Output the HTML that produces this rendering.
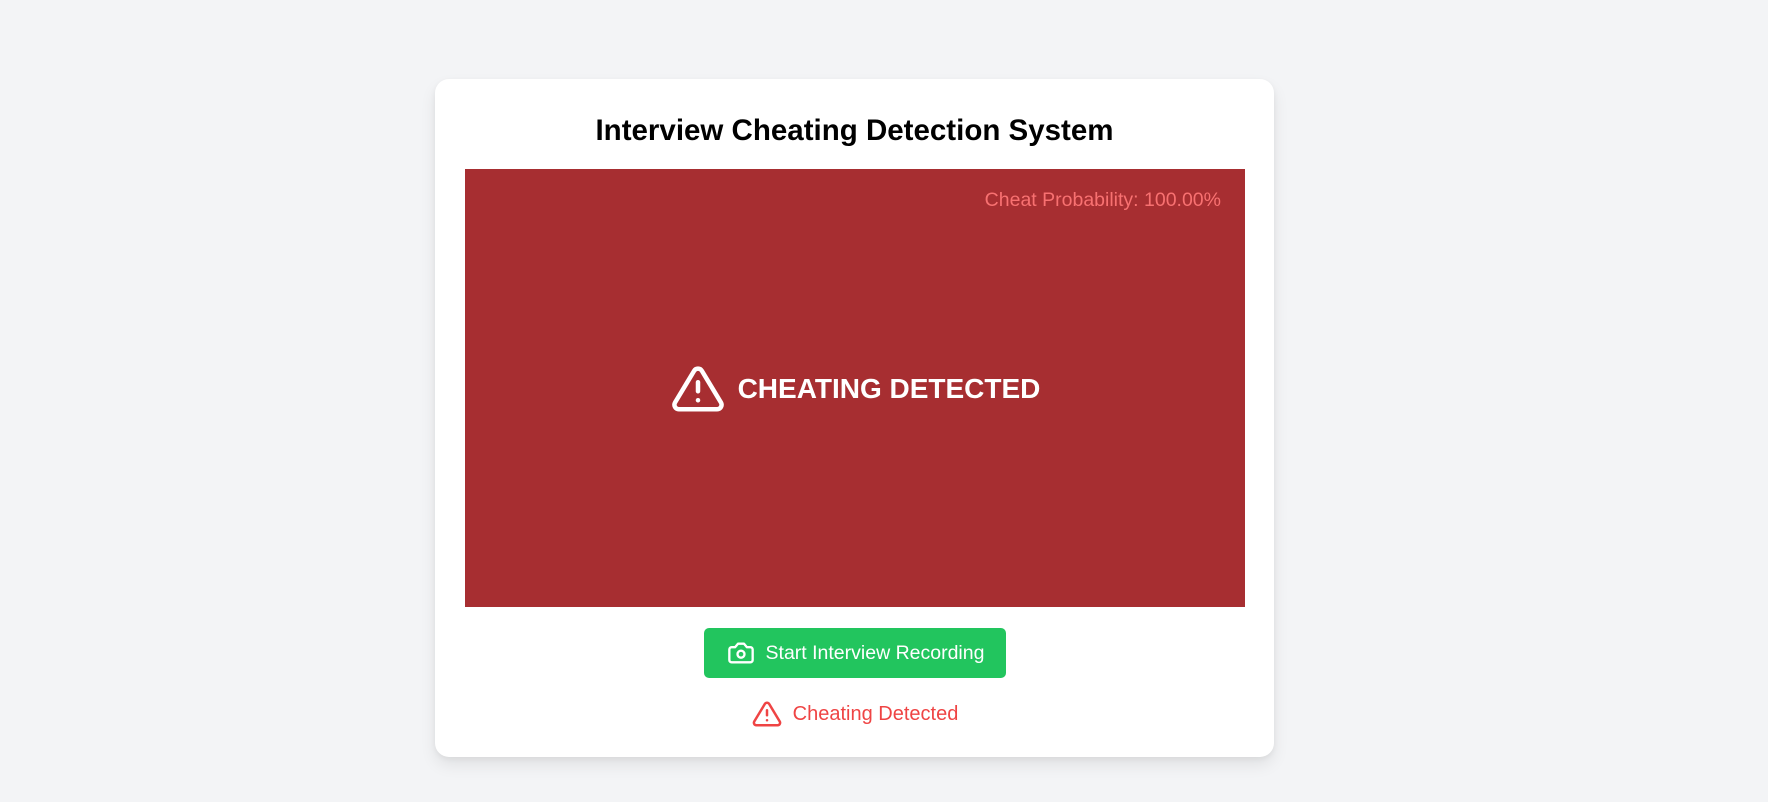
<!DOCTYPE html>
<html><head><style>
body{margin:0;width:1768px;height:802px;background:#f3f4f6;font-family:"Liberation Sans",sans-serif;position:relative;overflow:hidden}
.card{position:absolute;left:435px;top:79px;width:839px;height:678px;background:#fff;border-radius:14px;box-shadow:0 8px 16px rgba(0,0,0,.08),0 2px 6px rgba(0,0,0,.05)}
h1{position:absolute;left:435px;width:839px;top:112px;margin:0;text-align:center;font-size:29.5px;font-weight:bold;color:#000;line-height:38px}
.video{position:absolute;left:465px;top:169px;width:780px;height:438px;background:#a72e31}
.prob{position:absolute;right:24px;top:20px;color:#f87171;font-size:19.5px}
.center{position:absolute;left:0;right:0;top:193px;display:flex;justify-content:center;align-items:center;gap:12px;color:#fff;font-weight:bold;font-size:28px}
.btn{position:absolute;left:704px;top:628px;width:302px;height:50px;background:#22c55e;border-radius:5px;display:flex;align-items:center;justify-content:center;gap:10px;color:#fff;font-size:19.5px}
.status{position:absolute;left:435px;width:839px;top:699px;display:flex;justify-content:center;align-items:center;gap:10px;color:#ef4444;font-size:20px}
</style></head><body>
<div class="card"></div>
<h1>Interview Cheating Detection System</h1>
<div class="video">
<div class="prob">Cheat Probability: 100.00%</div>
<div class="center">
<svg width="56" height="54" viewBox="0 0 24 24" fill="none" stroke="#fff" stroke-width="2" stroke-linecap="round" stroke-linejoin="round"><path d="M10.3 3.9 1.8 18a2 2 0 0 0 1.7 3h17a2 2 0 0 0 1.7-3L13.7 3.9a2 2 0 0 0-3.4 0z"/><path d="M12 9v4"/><path d="M12 17h.01"/></svg>
<span>CHEATING DETECTED</span></div>
</div>
<div class="btn"><svg width="30" height="28" viewBox="0 0 24 24" fill="none" stroke="#fff" stroke-width="2" stroke-linecap="round" stroke-linejoin="round"><path d="M14.5 4h-5L7 7H4a2 2 0 0 0-2 2v9a2 2 0 0 0 2 2h16a2 2 0 0 0 2-2V9a2 2 0 0 0-2-2h-3l-2.5-3z"/><circle cx="12" cy="13" r="3"/></svg><span>Start Interview Recording</span></div>
<div class="status"><svg width="32" height="30" viewBox="0 0 24 24" fill="none" stroke="#ef4444" stroke-width="2" stroke-linecap="round" stroke-linejoin="round"><path d="M10.3 3.9 1.8 18a2 2 0 0 0 1.7 3h17a2 2 0 0 0 1.7-3L13.7 3.9a2 2 0 0 0-3.4 0z"/><path d="M12 9v4"/><path d="M12 17h.01"/></svg><span>Cheating Detected</span></div>
</body></html>
